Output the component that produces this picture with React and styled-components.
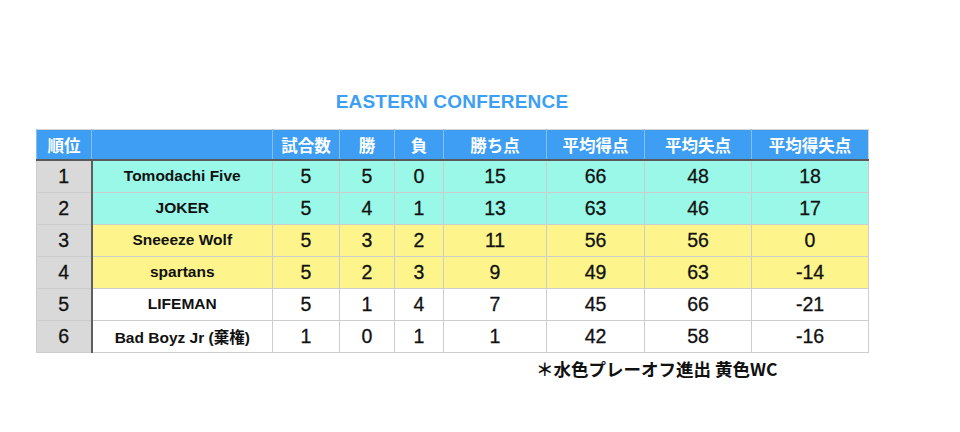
import React from 'react'
import styled, { createGlobalStyle } from 'styled-components'

const GlobalStyle = createGlobalStyle`
  body {
    margin: 0;
    background: #ffffff;
    font-family: "Liberation Sans", "Noto Sans CJK JP", sans-serif;
  }
`

const teams = [
  { rank: 1, name: 'Tomodachi Five', games: 5, win: 5, lose: 0, pts: 15, avg: 66, lost: 48, diff: 18, zone: 'playoff' },
  { rank: 2, name: 'JOKER', games: 5, win: 4, lose: 1, pts: 13, avg: 63, lost: 46, diff: 17, zone: 'playoff' },
  { rank: 3, name: 'Sneeeze Wolf', games: 5, win: 3, lose: 2, pts: 11, avg: 56, lost: 56, diff: 0, zone: 'wc' },
  { rank: 4, name: 'spartans', games: 5, win: 2, lose: 3, pts: 9, avg: 49, lost: 63, diff: -14, zone: 'wc' },
  { rank: 5, name: 'LIFEMAN', games: 5, win: 1, lose: 4, pts: 7, avg: 45, lost: 66, diff: -21, zone: 'none' },
  { rank: 6, name: 'Bad Boyz Jr (棄権)', games: 1, win: 0, lose: 1, pts: 1, avg: 42, lost: 58, diff: -16, zone: 'none' },
]

const columns = [
  { label: '順位', width: 55 },
  { label: '', width: 181 },
  { label: '試合数', width: 67 },
  { label: '勝', width: 55 },
  { label: '負', width: 49 },
  { label: '勝ち点', width: 103 },
  { label: '平均得点', width: 98 },
  { label: '平均失点', width: 107 },
  { label: '平均得失点', width: 117 },
]

const zoneColors = {
  playoff: '#9af8e8',
  wc: '#fdf58b',
  none: '#ffffff',
}

function App() {
  return (
    <Page>
      <GlobalStyle />
      <Title>EASTERN CONFERENCE</Title>
      <Standings>
        <colgroup>
          {columns.map((c, i) => (
            <col key={i} style={{ width: c.width }} />
          ))}
        </colgroup>
        <thead>
          <tr>
            {columns.map((c, i) => (
              <HeadCell key={i}>{c.label}</HeadCell>
            ))}
          </tr>
        </thead>
        <tbody>
          {teams.map((t) => (
            <Row key={t.rank} $bg={zoneColors[t.zone]}>
              <RankCell>{t.rank}</RankCell>
              <NameCell>{t.name}</NameCell>
              <NumCell>{t.games}</NumCell>
              <NumCell>{t.win}</NumCell>
              <NumCell>{t.lose}</NumCell>
              <NumCell>{t.pts}</NumCell>
              <NumCell>{t.avg}</NumCell>
              <NumCell>{t.lost}</NumCell>
              <NumCell>{t.diff}</NumCell>
            </Row>
          ))}
        </tbody>
      </Standings>
      <Note>＊水色プレーオフ進出 黄色WC</Note>
    </Page>
  )
}

export default App

const Page = styled.div`
  padding: 90px 0 0 36px;
  width: 832px;
`

const Title = styled.div`
  height: 24px;
  line-height: 24px;
  margin-bottom: 15px;
  text-align: center;
  color: #3d9ff4;
  font-size: 19px;
  font-weight: bold;
  letter-spacing: 0.2px;
`

const Standings = styled.table`
  width: 832px;
  table-layout: fixed;
  border-collapse: collapse;
  border-top: 1px solid #d4d4d4;
  border-left: 1px solid #c4c4c4;
  border-right: 1px solid #d4d4d4;
`

const HeadCell = styled.th`
  height: 29px;
  padding: 0;
  background: #3e9ef3;
  color: #ffffff;
  font-family: "Noto Sans CJK JP", sans-serif;
  font-size: 16.5px;
  font-weight: 700;
  text-align: center;
  border-left: 1px solid #86bdeb;
  border-bottom: 2px solid #5a5a5a;
`

const Row = styled.tr`
  height: 32px;
  background: ${(p) => p.$bg};
`

const NumCell = styled.td`
  padding: 0;
  text-align: center;
  color: #111111;
  font-size: 19.5px;
  -webkit-text-stroke: 0.3px #111111;
  border: 1px solid #cdcdcd;
`

const NameCell = styled(NumCell)`
  font-size: 15.5px;
  font-weight: bold;
  -webkit-text-stroke: 0;
  font-family: "Liberation Sans", "Noto Sans CJK JP", sans-serif;
`

const RankCell = styled(NumCell)`
  background: #d9d9d9;
  border-right: 2px solid #5e5e5e;
`

const Note = styled.div`
  margin-top: 4px;
  padding-left: 500px;
  line-height: 24px;
  font-family: "Noto Sans CJK JP", sans-serif;
  font-size: 17.5px;
  font-weight: 700;
  color: #111111;
`
